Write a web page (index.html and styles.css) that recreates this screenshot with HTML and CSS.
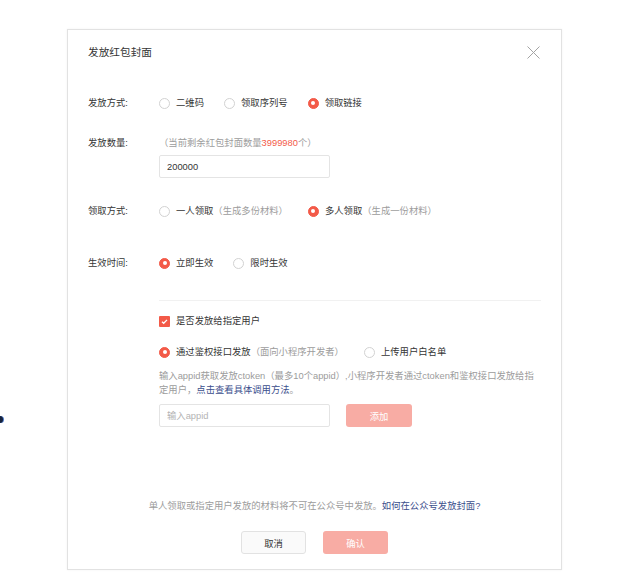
FILE: index.html
```html
<!DOCTYPE html>
<html lang="zh-CN">

<head>
    <meta charset="UTF-8">
    <meta name="viewport" content="width=device-width, initial-scale=1.0">
    <title>发放红包封面</title>
    <link rel="stylesheet" href="styles.css">
</head>

<body>
    <span class="edge-dot"></span>
    <div class="dialog">
        <div class="dialog-header">
            <h2 class="dialog-title">发放红包封面</h2>
            <button class="dialog-close" type="button">
                <svg width="13" height="13" viewBox="0 0 13 13">
                    <path d="M0.5 0.5L12.5 12.5M12.5 0.5L0.5 12.5" stroke="#a3a3a3" stroke-width="1" fill="none" />
                </svg>
            </button>
        </div>
        <div class="dialog-body">
            <div class="form-row row-mode">
                <div class="form-label">发放方式:</div>
                <div class="form-control radio-group">
                    <span class="radio"><i class="radio-icon"></i>二维码</span>
                    <span class="radio"><i class="radio-icon"></i>领取序列号</span>
                    <span class="radio"><i class="radio-icon checked"></i>领取链接</span>
                </div>
            </div>
            <div class="form-row row-count">
                <div class="form-label">发放数量:</div>
                <div class="form-control">
                    <p class="hint">（当前剩余红包封面数量<span class="num">3999980</span>个）</p>
                    <input class="text-input count-input" type="text" value="200000">
                </div>
            </div>
            <div class="form-row row-receive">
                <div class="form-label">领取方式:</div>
                <div class="form-control radio-group">
                    <span class="radio"><i class="radio-icon"></i>一人领取<span class="note">（生成多份材料）</span></span>
                    <span class="radio"><i class="radio-icon checked"></i>多人领取<span class="note">（生成一份材料）</span></span>
                </div>
            </div>
            <div class="form-row row-time">
                <div class="form-label">生效时间:</div>
                <div class="form-control radio-group">
                    <span class="radio"><i class="radio-icon checked"></i>立即生效</span>
                    <span class="radio"><i class="radio-icon"></i>限时生效</span>
                </div>
            </div>

            <div class="target">
                <div class="checkbox">
                    <i class="checkbox-icon">
                        <svg width="11" height="11" viewBox="0 0 11 11">
                            <path d="M3 5.7L4.7 7.3L8 3.9" stroke="#fff" stroke-width="1.3" fill="none" />
                        </svg>
                    </i>是否发放给指定用户
                </div>
                <div class="radio-group target-mode">
                    <span class="radio"><i class="radio-icon checked"></i>通过鉴权接口发放 <span class="note">（面向小程序开发者）</span></span>
                    <span class="radio"><i class="radio-icon"></i>上传用户白名单</span>
                </div>
                <p class="desc">输入appid获取发放ctoken（最多10个appid）,小程序开发者通过ctoken和鉴权接口发放给指定用户，<a class="link" href="#">点击查看具体调用方法</a>。</p>
                <div class="appid-row">
                    <input class="text-input" type="text" placeholder="输入appid">
                    <button class="btn btn-primary btn-add" type="button">添加</button>
                </div>
            </div>
        </div>
        <div class="dialog-footer">
            <p class="footer-note">单人领取或指定用户发放的材料将不可在公众号中发放。<a class="link" href="#">如何在公众号发放封面?</a></p>
            <div class="footer-btns">
                <button class="btn btn-default" type="button">取消</button>
                <button class="btn btn-primary" type="button">确认</button>
            </div>
        </div>
    </div>
</body>

</html>
```

FILE: styles.css
```css
*,
*::after,
*::before {
    margin: 0;
    padding: 0;
    box-sizing: border-box;
}

body {
    position: relative;
    width: 635px;
    height: 587px;
    overflow: hidden;
    background-color: #ffffff;
    font-family: "Liberation Sans", "Noto Sans CJK SC", sans-serif;
    font-size: 9.33px;
    line-height: 14px;
    color: #353535;
}

.edge-dot {
    position: absolute;
    left: -4px;
    top: 416px;
    width: 7px;
    height: 7px;
    border-radius: 50%;
    background-color: #17233d;
    box-shadow: 1px 0 0 #4a78c8;
}

.dialog {
    width: 495px;
    margin: 29px 0 0 67px;
    border: 1px solid #e2e2e2;
    box-shadow: 0 0 2px rgba(0, 0, 0, 0.06);
    padding-bottom: 15px;
}

.dialog-header {
    display: flex;
    justify-content: space-between;
    align-items: center;
    padding: 15px 21px 0 20px;
}

.dialog-title {
    font-size: 10.67px;
    font-weight: normal;
    line-height: 14px;
    color: #353535;
}

.dialog-close {
    display: flex;
    border: none;
    background: none;
}

.dialog-body {
    padding: 0 20px;
}

.form-row {
    display: flex;
}

.form-label {
    width: 71px;
    flex-shrink: 0;
}

.form-control {
    flex: 1;
}

.row-mode {
    margin-top: 37px;
}

.row-count {
    margin-top: 26px;
}

.row-receive {
    margin-top: 26px;
}

.row-time {
    margin-top: 38px;
}

.radio-group {
    display: flex;
    align-items: center;
}

.radio {
    display: flex;
    align-items: center;
    margin-right: 20px;
    white-space: nowrap;
}

.radio-icon {
    width: 11px;
    height: 11px;
    margin-right: 6px;
    border: 1px solid #d2d2d2;
    border-radius: 50%;
    position: relative;
}

.radio-icon.checked {
    border-color: #f35a48;
    background-color: #f35a48;
}

.radio-icon.checked::after {
    content: "";
    position: absolute;
    left: 2.5px;
    top: 2.5px;
    width: 4px;
    height: 4px;
    border-radius: 50%;
    background-color: #ffffff;
}

.note,
.hint {
    color: #9c9c9c;
}

.num {
    color: #f35a48;
}

.text-input {
    display: block;
    width: 171px;
    height: 23px;
    padding: 0 7px;
    border: 1px solid #e4e4e4;
    border-radius: 2px;
    font-family: inherit;
    font-size: 9.33px;
    color: #353535;
    outline: none;
}

.text-input::placeholder {
    color: #b4b4b4;
}

.count-input {
    margin-top: 5px;
}

.target {
    margin: 30px 0 0 71px;
    padding-top: 13px;
    border-top: 1px solid #f1f1f1;
}

.checkbox {
    display: flex;
    align-items: center;
}

.checkbox-icon {
    display: flex;
    width: 11px;
    height: 11px;
    margin-right: 6px;
    border-radius: 1px;
    background-color: #f35a48;
}

.target-mode {
    margin-top: 17px;
}

.target-mode .radio:first-child {
    margin-right: 20px;
}

.desc {
    margin-top: 10px;
    color: #9c9c9c;
}

.link {
    color: #3b4e8c;
    text-decoration: none;
}

.appid-row {
    display: flex;
    margin-top: 7px;
}

.btn {
    width: 65px;
    height: 23px;
    border-radius: 3px;
    font-family: inherit;
    font-size: 9.33px;
}

.btn-primary {
    border: none;
    background-color: #f8aca4;
    color: #ffffff;
}

.btn-default {
    border: 1px solid #e2e2e2;
    background-color: #fafafa;
    color: #353535;
}

.btn-add {
    width: 66px;
    margin-left: 16px;
}

.dialog-footer {
    margin-top: 72px;
    text-align: center;
}

.footer-note {
    color: #9c9c9c;
}

.footer-btns {
    display: flex;
    justify-content: center;
    gap: 17px;
    margin-top: 18px;
}
```
